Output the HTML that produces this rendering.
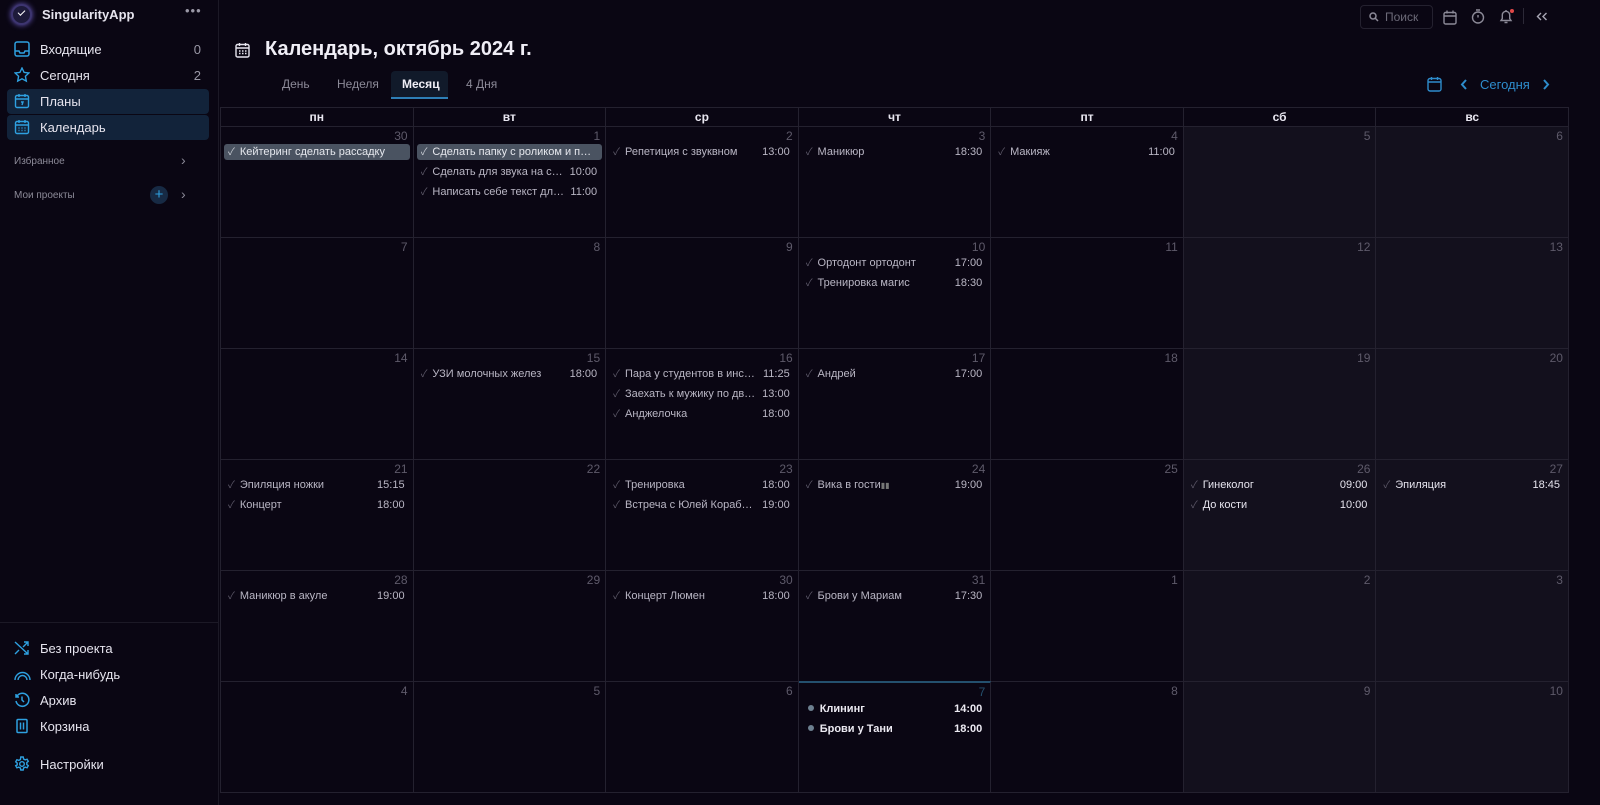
<!DOCTYPE html>
<html><head><meta charset="utf-8"><style>
*{box-sizing:border-box;margin:0;padding:0}
body{width:1600px;height:805px;background:#0a0613;font-family:"Liberation Sans","Noto Sans CJK SC",sans-serif;color:#e6e4ee;position:relative;overflow:hidden}
.sb{position:absolute;left:0;top:0;width:219px;height:805px;border-right:1px solid #1c1926;background:#0a0613}
.logo{position:absolute;left:11px;top:4px;width:21px;height:21px;border-radius:50%;background:#1d1a3a;box-shadow:0 0 6px #6b5cc4;border:2px solid #3d3570}
.logo:after{content:"";position:absolute;left:5px;top:4px;width:6px;height:3px;border-left:1.5px solid #fff;border-bottom:1.5px solid #fff;transform:rotate(-45deg)}
.t{position:absolute;white-space:nowrap}
.nav{position:absolute;left:7px;width:202px;height:25px;border-radius:4px}
.nav.sel{background:#12233a}
.ico{position:absolute;left:14px}
.cnt{position:absolute;right:17px;font-size:13px;color:#9a98a6}
.grid{position:absolute;left:220px;top:107px;width:1349px;display:grid;grid-template-columns:repeat(7,minmax(0,1fr));grid-template-rows:20px repeat(6,111px);border-left:1px solid #24212f}
.h{border-right:1px solid #24212f;border-top:1px solid #24212f;border-bottom:1px solid #24212f;font-size:12px;font-weight:bold;text-align:center;line-height:18px;color:#e8e6f0}
.c{border-right:1px solid #24212f;border-bottom:1px solid #24212f;position:relative;padding-top:17px;min-width:0;overflow:hidden}
.we{background:#13101d}
.d{position:absolute;right:5px;top:2px;font-size:12px;color:#5e5a6a}
.e{height:16px;margin:0 3px 4px 3px;padding:0 5px 0 4px;font-size:11px;line-height:16px;color:#b9b6c4;display:flex;white-space:nowrap}
.e .n{flex:1;min-width:0;overflow:hidden;text-overflow:ellipsis}
.e .n:before{content:"✓";color:#5e5a6a;margin-right:5px;font-size:10px}
.e .tm{margin-left:6px}
.e.hl{background:#4a5361;border-radius:3px;color:#e6e8ee}
.e.hl .n:before{color:#c8ccd4}
.e.dot .n:before{content:"";display:inline-block;width:6px;height:6px;border-radius:50%;background:#6d8090;margin:0 6px 1px 2px}
.e.dot{color:#eceaf2;font-weight:bold}
</style></head><body>
<div class="sb">
<div class="logo"></div>
<div class="t" style="left:42px;top:7px;font-size:13px;font-weight:bold">SingularityApp</div>
<div class="t" style="left:185px;top:3px;font-size:13px;color:#9a98a6;letter-spacing:1px">•••</div>

<svg class="ico" style="top:41px" width="16" height="16" viewBox="0 0 16 16" fill="none" stroke="#2ea0e0" stroke-width="1.5"><rect x="1" y="1" width="14" height="14" rx="2"/><path d="M1 10h4l1 2h4l1-2h4"/></svg>
<div class="t" style="left:40px;top:42px;font-size:13px">Входящие</div><div class="cnt" style="top:42px">0</div>
<svg class="ico" style="top:67px" width="16" height="16" viewBox="0 0 16 16" fill="none" stroke="#2ea0e0" stroke-width="1.4"><path d="M8 1l2.1 4.4 4.8.6-3.5 3.3.9 4.8L8 11.8 3.7 14.1l.9-4.8L1.1 6l4.8-.6z"/></svg>
<div class="t" style="left:40px;top:68px;font-size:13px">Сегодня</div><div class="cnt" style="top:68px">2</div>
<div class="nav sel" style="top:89px"></div>
<svg class="ico" style="top:93px" width="16" height="16" viewBox="0 0 16 16" fill="none" stroke="#2ea0e0" stroke-width="1.4"><rect x="1.5" y="2.5" width="13" height="12" rx="1.5"/><path d="M1.5 6h13M5 1v3M11 1v3M7 9h2l-1 3"/></svg>
<div class="t" style="left:40px;top:94px;font-size:13px">Планы</div>
<div class="nav sel" style="top:115px"></div>
<svg class="ico" style="top:119px" width="16" height="16" viewBox="0 0 16 16" fill="none" stroke="#2ea0e0" stroke-width="1.4"><rect x="1.5" y="2.5" width="13" height="12" rx="1.5"/><path d="M1.5 6h13M5 1v3M11 1v3M4.5 9h1M7.5 9h1M10.5 9h1M4.5 11.5h1M7.5 11.5h1M10.5 11.5h1"/></svg>
<div class="t" style="left:40px;top:120px;font-size:13px">Календарь</div>
<div class="t" style="left:14px;top:156px;font-size:10px;color:#8c8a98">Избранное</div>
<div class="t" style="left:181px;top:152px;font-size:14px;color:#8c8a98">›</div>
<div class="t" style="left:14px;top:190px;font-size:10px;color:#8c8a98">Мои проекты</div>
<div style="position:absolute;left:150px;top:186px;width:18px;height:18px;border-radius:50%;background:#172a44;color:#2ea0e0;font-size:15px;line-height:17px;text-align:center">+</div>
<div class="t" style="left:181px;top:186px;font-size:14px;color:#8c8a98">›</div>
<div style="position:absolute;left:0;top:622px;width:219px;border-top:1px solid #1c1926"></div>
<svg class="ico" style="top:640px" width="16" height="16" viewBox="0 0 16 16" fill="none" stroke="#2ea0e0" stroke-width="1.4"><path d="M1 2l13 12M10 14h4v-4M10 2h4v4M14 2L9 7M1 14l4-4"/></svg>
<div class="t" style="left:40px;top:641px;font-size:13px">Без проекта</div>
<svg class="ico" style="top:667px" width="17" height="16" viewBox="0 0 17 16" fill="none" stroke="#2ea0e0" stroke-width="1.4"><path d="M1 13a7.5 7.5 0 0 1 15 0M4 13a4.5 4.5 0 0 1 9 0"/></svg>
<div class="t" style="left:40px;top:667px;font-size:13px">Когда-нибудь</div>
<svg class="ico" style="top:692px" width="16" height="16" viewBox="0 0 16 16" fill="none" stroke="#2ea0e0" stroke-width="1.5"><path d="M2.5 5A6.5 6.5 0 1 1 2 9M2 2v3h3M8 4.5V8l2 2"/></svg>
<div class="t" style="left:40px;top:693px;font-size:13px">Архив</div>
<svg class="ico" style="top:718px" width="16" height="16" viewBox="0 0 16 16" fill="none" stroke="#2ea0e0" stroke-width="1.5"><rect x="3" y="1.5" width="10" height="13" rx="1"/><path d="M6.5 4.5v7M9.5 4.5v7"/></svg>
<div class="t" style="left:40px;top:719px;font-size:13px">Корзина</div>
<svg class="ico" style="top:756px" width="16" height="16" viewBox="0 0 16 16" fill="none" stroke="#2ea0e0" stroke-width="1.4"><circle cx="8" cy="8" r="2.3"/><path d="M6.8 1h2.4l.4 2 1.6.9 1.9-.7 1.2 2.1-1.5 1.3v1.8l1.5 1.3-1.2 2.1-1.9-.7-1.6.9-.4 2H6.8l-.4-2-1.6-.9-1.9.7-1.2-2.1L3.2 8.9V7.1L1.7 5.8l1.2-2.1 1.9.7 1.6-.9z"/></svg>
<div class="t" style="left:40px;top:757px;font-size:13px">Настройки</div>
</div>

<div style="position:absolute;left:1360px;top:5px;width:73px;height:24px;border:1px solid #24212f;border-radius:4px"></div>
<svg style="position:absolute;left:1369px;top:12px" width="10" height="10" viewBox="0 0 10 10" fill="none" stroke="#8c8a98" stroke-width="1.5"><circle cx="4" cy="4" r="3"/><path d="M6 6l3 3"/></svg>
<div class="t" style="left:1385px;top:10px;font-size:12px;color:#6c6a78">Поиск</div>
<svg style="position:absolute;left:1443px;top:10px" width="14" height="15" viewBox="0 0 14 15" fill="none" stroke="#8c8a98" stroke-width="1.4"><rect x="1" y="2.5" width="12" height="11.5" rx="1.5"/><path d="M1 6h12M4 0.5v3M10 0.5v3"/></svg>
<svg style="position:absolute;left:1471px;top:9px" width="14" height="15" viewBox="0 0 14 15" fill="none" stroke="#8c8a98" stroke-width="1.4"><circle cx="7" cy="8.5" r="5.5"/><path d="M5 1h4M7 8.5V6"/></svg>
<svg style="position:absolute;left:1499px;top:9px" width="14" height="15" viewBox="0 0 14 15" fill="none" stroke="#8c8a98" stroke-width="1.4"><path d="M2 11.5h10l-1.3-2V6a3.7 3.7 0 0 0-7.4 0v3.5zM5.5 13.5h3M7 1v1"/></svg>
<div style="position:absolute;left:1510px;top:9px;width:4px;height:4px;border-radius:50%;background:#e04848"></div>
<div style="position:absolute;left:1523px;top:8px;height:16px;border-left:1px solid #2c2937"></div>
<svg style="position:absolute;left:1536px;top:12px" width="12" height="9" viewBox="0 0 12 9" fill="none" stroke="#a8a6b4" stroke-width="1.4"><path d="M5 1L1.5 4.5 5 8M10.5 1L7 4.5 10.5 8"/></svg>

<svg style="position:absolute;left:235px;top:42px" width="15" height="16" viewBox="0 0 15 16" fill="none" stroke="#e6e4ee" stroke-width="1.4"><rect x="1" y="2.5" width="13" height="12.5" rx="1.5"/><path d="M1 6h13M4.5 1v3M10.5 1v3M4 9h1.5M7 9h1.5M10 9h1.5M4 11.5h1.5M7 11.5h1.5M10 11.5h1.5"/></svg>
<div class="t" style="left:265px;top:38px;font-size:20px;font-weight:bold;color:#f0eef6">Календарь, октябрь 2024 г.</div>
<div class="t" style="left:282px;top:77px;font-size:12px;color:#8c8a98">День</div>
<div class="t" style="left:337px;top:77px;font-size:12px;color:#8c8a98">Неделя</div>
<div style="position:absolute;left:391px;top:71px;width:57px;height:28px;background:#111a2a;border-radius:4px 4px 0 0;border-bottom:2px solid #2e7fb6"></div>
<div class="t" style="left:402px;top:77px;font-size:12px;font-weight:bold;color:#f0eef6">Месяц</div>
<div class="t" style="left:466px;top:77px;font-size:12px;color:#8c8a98">4 Дня</div>
<svg style="position:absolute;left:1427px;top:76px" width="15" height="16" viewBox="0 0 15 16" fill="none" stroke="#2e8ccc" stroke-width="1.4"><rect x="1" y="2.5" width="13" height="12.5" rx="2"/><path d="M1 6h13M4.5 1v3M10.5 1v3"/></svg>
<svg style="position:absolute;left:1460px;top:79px" width="8" height="11" viewBox="0 0 8 11" fill="none" stroke="#2e8ccc" stroke-width="2"><path d="M6 1L2 5.5 6 10"/></svg>
<div class="t" style="left:1480px;top:77px;font-size:13px;color:#2e8ccc">Сегодня</div>
<svg style="position:absolute;left:1542px;top:79px" width="8" height="11" viewBox="0 0 8 11" fill="none" stroke="#2e8ccc" stroke-width="2"><path d="M2 1l4 4.5L2 10"/></svg>

<div class="grid">
<div class="h">пн</div><div class="h">вт</div><div class="h">ср</div><div class="h">чт</div><div class="h">пт</div><div class="h">сб</div><div class="h">вс</div>
<div class="c"><span class="d">30</span><div class="e hl"><span class="n">Кейтеринг сделать рассадку</span></div></div>
<div class="c"><span class="d">1</span><div class="e hl"><span class="n">Сделать папку с роликом и презентацией</span></div><div class="e"><span class="n">Сделать для звука на списке</span><span class="tm">10:00</span></div><div class="e"><span class="n">Написать себе текст для выступления</span><span class="tm">11:00</span></div></div>
<div class="c"><span class="d">2</span><div class="e"><span class="n">Репетиция с звуквном</span><span class="tm">13:00</span></div></div>
<div class="c"><span class="d">3</span><div class="e"><span class="n">Маникюр</span><span class="tm">18:30</span></div></div>
<div class="c"><span class="d">4</span><div class="e"><span class="n">Макияж</span><span class="tm">11:00</span></div></div>
<div class="c we"><span class="d">5</span></div>
<div class="c we"><span class="d">6</span></div>
<div class="c"><span class="d">7</span></div>
<div class="c"><span class="d">8</span></div>
<div class="c"><span class="d">9</span></div>
<div class="c"><span class="d">10</span><div class="e"><span class="n">Ортодонт ортодонт</span><span class="tm">17:00</span></div><div class="e"><span class="n">Тренировка магис</span><span class="tm">18:30</span></div></div>
<div class="c"><span class="d">11</span></div>
<div class="c we"><span class="d">12</span></div>
<div class="c we"><span class="d">13</span></div>
<div class="c"><span class="d">14</span></div>
<div class="c"><span class="d">15</span><div class="e"><span class="n">УЗИ молочных желез</span><span class="tm">18:00</span></div></div>
<div class="c"><span class="d">16</span><div class="e"><span class="n">Пара у студентов в институте</span><span class="tm">11:25</span></div><div class="e"><span class="n">Заехать к мужику по дверцам</span><span class="tm">13:00</span></div><div class="e"><span class="n">Анджелочка</span><span class="tm">18:00</span></div></div>
<div class="c"><span class="d">17</span><div class="e"><span class="n">Андрей</span><span class="tm">17:00</span></div></div>
<div class="c"><span class="d">18</span></div>
<div class="c we"><span class="d">19</span></div>
<div class="c we"><span class="d">20</span></div>
<div class="c"><span class="d">21</span><div class="e"><span class="n">Эпиляция ножки</span><span class="tm">15:15</span></div><div class="e"><span class="n">Концерт</span><span class="tm">18:00</span></div></div>
<div class="c"><span class="d">22</span></div>
<div class="c"><span class="d">23</span><div class="e"><span class="n">Тренировка</span><span class="tm">18:00</span></div><div class="e"><span class="n">Встреча с Юлей Корабель</span><span class="tm">19:00</span></div></div>
<div class="c"><span class="d">24</span><div class="e"><span class="n">Вика в гости<span style="font-size:8px;color:#777">▮▮</span></span><span class="tm">19:00</span></div></div>
<div class="c"><span class="d">25</span></div>
<div class="c we"><span class="d">26</span><div class="e" style="color:#e6e4ee"><span class="n">Гинеколог</span><span class="tm">09:00</span></div><div class="e" style="color:#e6e4ee"><span class="n">До кости</span><span class="tm">10:00</span></div></div>
<div class="c we"><span class="d">27</span><div class="e" style="color:#e6e4ee"><span class="n">Эпиляция</span><span class="tm">18:45</span></div></div>
<div class="c"><span class="d">28</span><div class="e"><span class="n">Маникюр в акуле</span><span class="tm">19:00</span></div></div>
<div class="c"><span class="d">29</span></div>
<div class="c"><span class="d">30</span><div class="e"><span class="n">Концерт Люмен</span><span class="tm">18:00</span></div></div>
<div class="c"><span class="d">31</span><div class="e"><span class="n">Брови у Мариам</span><span class="tm">17:30</span></div></div>
<div class="c"><span class="d">1</span></div>
<div class="c we"><span class="d">2</span></div>
<div class="c we"><span class="d">3</span></div>
<div class="c"><span class="d">4</span></div>
<div class="c"><span class="d">5</span></div>
<div class="c"><span class="d">6</span></div>
<div class="c" style="border-top:2px solid #24506e;margin-top:-1px;padding-top:18px"><span class="d" style="color:#24506e">7</span><div class="e dot"><span class="n">Клининг</span><span class="tm">14:00</span></div><div class="e dot"><span class="n">Брови у Тани</span><span class="tm">18:00</span></div></div>
<div class="c"><span class="d">8</span></div>
<div class="c we"><span class="d">9</span></div>
<div class="c we"><span class="d">10</span></div>
</div>
</body></html>
